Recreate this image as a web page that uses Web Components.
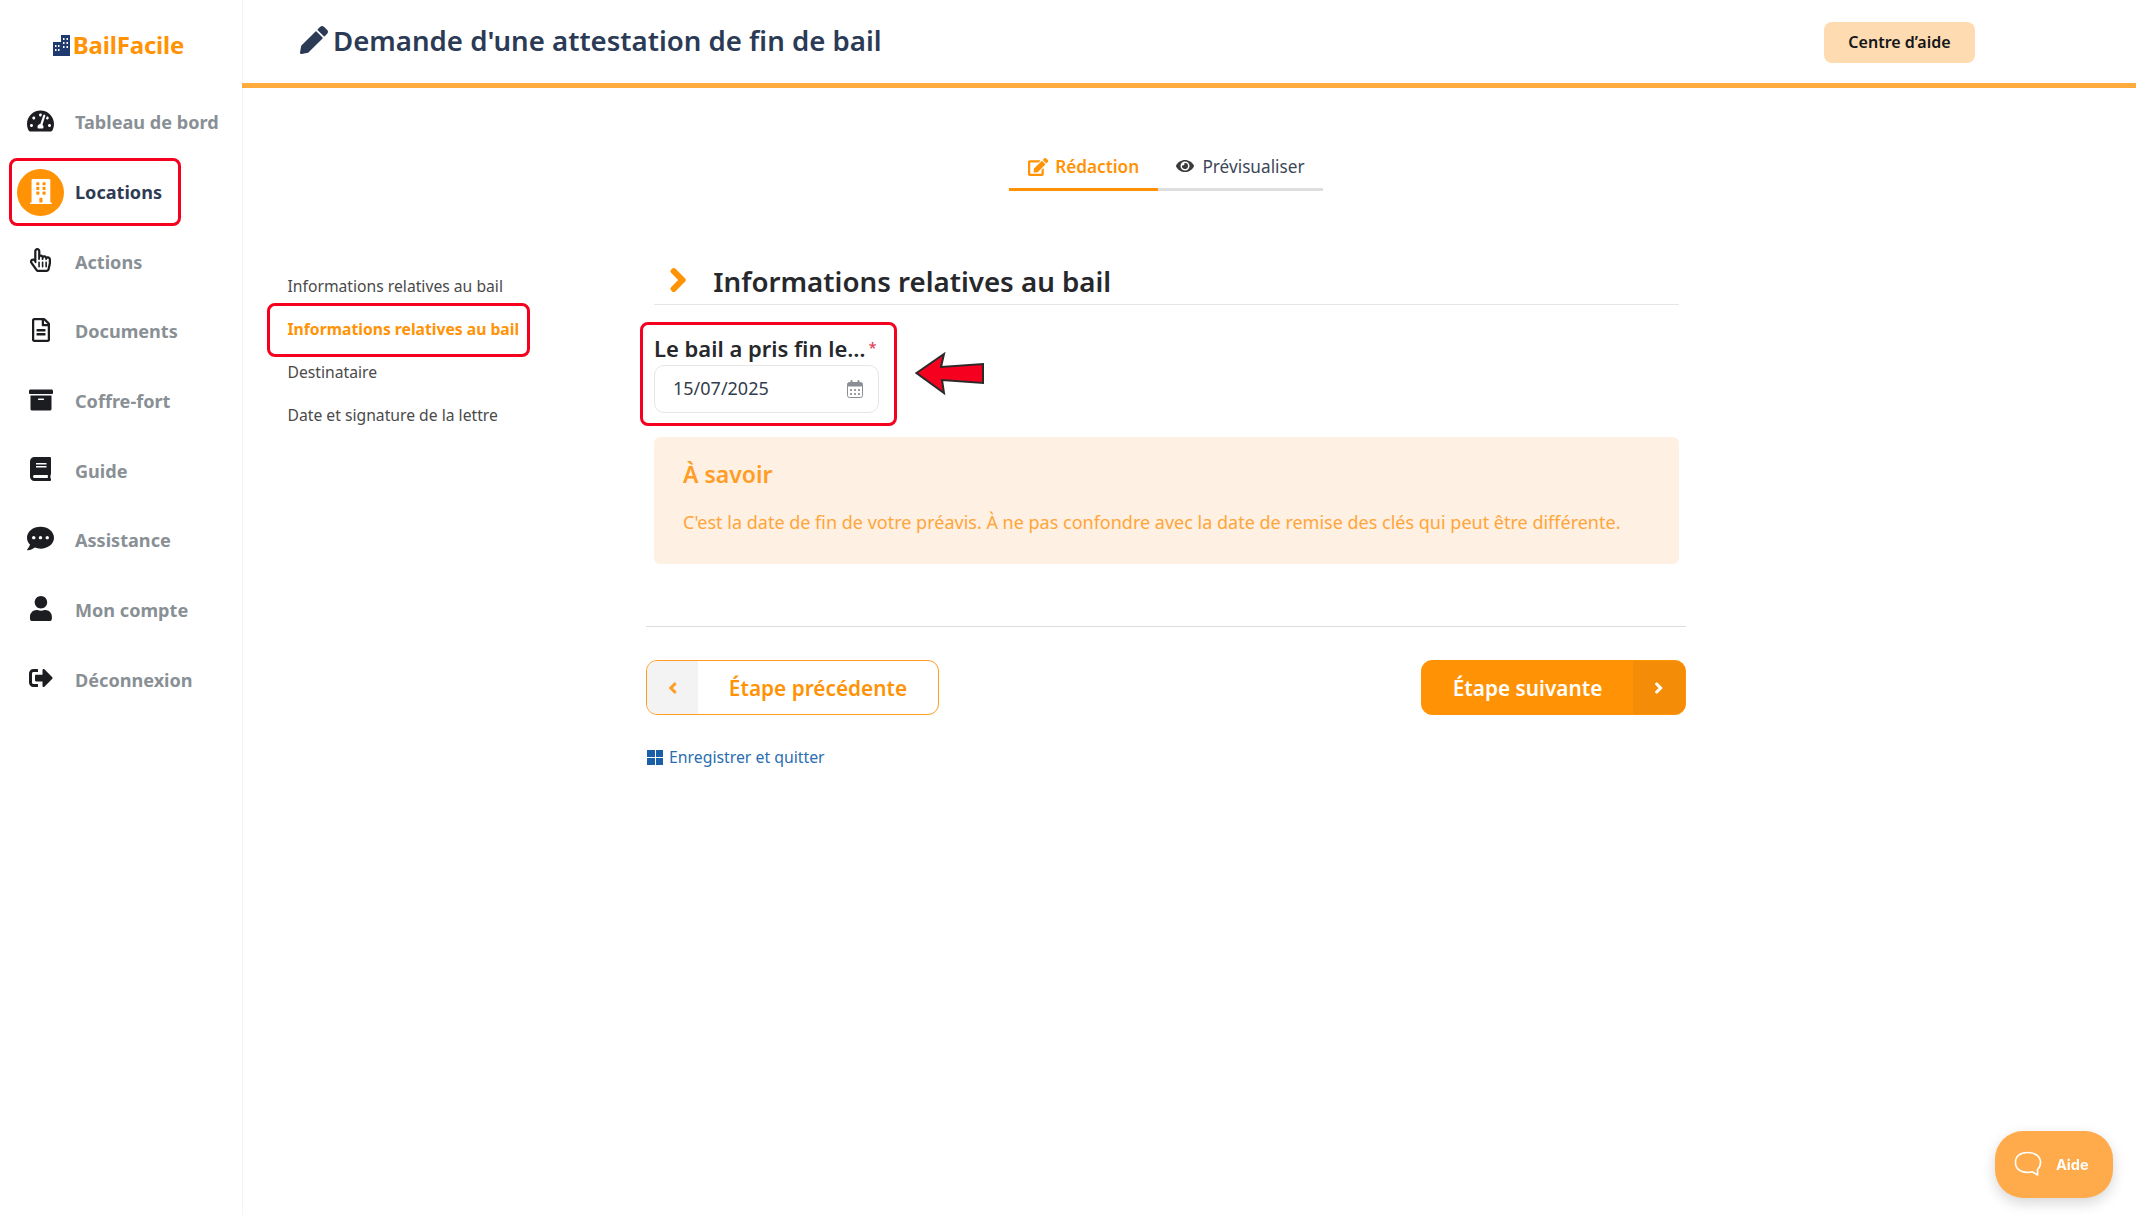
<!DOCTYPE html>
<html lang="fr">
<head>
<meta charset="utf-8">
<title>BailFacile</title>
<style>
  html, body { margin: 0; height: 100%; background: #fff; }
  body { font-family: "Noto Sans", "Open Sans", sans-serif; overflow: hidden; }
</style>
</head>
<body>
<bf-app>
  <bf-sidebar slot="side">
    <bf-nav icon="gauge">Tableau de bord</bf-nav>
    <bf-nav icon="building" active framed>Locations</bf-nav>
    <bf-nav icon="hand">Actions</bf-nav>
    <bf-nav icon="file">Documents</bf-nav>
    <bf-nav icon="archive">Coffre-fort</bf-nav>
    <bf-nav icon="book">Guide</bf-nav>
    <bf-nav icon="dots">Assistance</bf-nav>
    <bf-nav icon="user">Mon compte</bf-nav>
    <bf-nav icon="logout">Déconnexion</bf-nav>
  </bf-sidebar>
  <bf-header slot="head">Demande d'une attestation de fin de bail</bf-header>
  <bf-tabs slot="tabs"></bf-tabs>
  <bf-steps slot="steps"></bf-steps>
  <bf-form slot="form"></bf-form>
</bf-app>
<bf-help></bf-help>

<script>
const ICONS = {
  pencil: ['0 0 512 512', 'M497.9 142.1l-46.1 46.1c-4.7 4.7-12.3 4.7-17 0l-111-111c-4.7-4.7-4.7-12.3 0-17l46.1-46.1c18.7-18.7 49.1-18.7 67.9 0l60.1 60.1c18.8 18.7 18.8 49.1 0 67.9zM284.2 99.8L21.6 362.4.4 483.9c-2.9 16.4 11.4 30.6 27.8 27.8l121.5-21.3 262.6-262.6c4.7-4.7 4.7-12.3 0-17l-111-111c-4.8-4.7-12.4-4.7-17.1 0z'],
  edit: ['0 0 576 512', 'M402.6 83.2l90.2 90.2c3.8 3.8 3.8 10 0 13.8L274.4 405.6l-92.8 10.3c-12.4 1.4-22.9-9.1-21.5-21.5l10.3-92.8L388.8 83.2c3.8-3.8 10-3.8 13.8 0zm162-22.9l-48.8-48.8c-15.2-15.2-39.9-15.2-55.2 0l-35.4 35.4c-3.8 3.8-3.8 10 0 13.8l90.2 90.2c3.8 3.8 10 3.8 13.8 0l35.4-35.4c15.2-15.3 15.2-40 0-55.2zM384 346.2V448H64V128h229.8c3.2 0 6.2-1.3 8.5-3.5l40-40c7.6-7.6 2.2-20.5-8.5-20.5H48C21.5 64 0 85.5 0 112v352c0 26.5 21.5 48 48 48h352c26.5 0 48-21.5 48-48V306.2c0-10.7-12.9-16-20.5-8.5l-40 40c-2.2 2.3-3.5 5.3-3.5 8.5z'],
  eye: ['0 0 576 512', 'M572.52 241.4C518.29 135.59 410.93 64 288 64S57.68 135.64 3.48 241.41a32.35 32.35 0 0 0 0 29.19C57.71 376.41 165.07 448 288 448s230.32-71.64 284.52-177.41a32.35 32.35 0 0 0 0-29.19zM288 400a144 144 0 1 1 144-144 143.93 143.93 0 0 1-144 144zm0-240a95.31 95.31 0 0 0-25.31 3.79 47.85 47.85 0 0 1-66.9 66.9A95.78 95.78 0 1 0 288 160z'],
  chevron: ['0 0 320 512', 'M285.476 272.971L91.132 467.314c-9.373 9.373-24.569 9.373-33.941 0l-22.667-22.667c-9.357-9.357-9.375-24.522-.04-33.901L188.505 256 34.484 101.255c-9.335-9.379-9.317-24.544.04-33.901l22.667-22.667c9.373-9.373 24.569-9.373 33.941 0L285.475 239.03c9.373 9.372 9.373 24.568.001 33.941z'],
  chevronleft: ['0 0 320 512', 'M34.52 239.03L228.87 44.69c9.37-9.37 24.57-9.37 33.94 0l22.67 22.67c9.36 9.36 9.37 24.52.04 33.9L131.49 256l154.02 154.75c9.34 9.38 9.32 24.54-.04 33.9l-22.67 22.67c-9.37 9.37-24.57 9.37-33.94 0L34.52 272.97c-9.37-9.37-9.37-24.57 0-33.94z'],
  user: ['0 0 448 512', 'M224 256c70.7 0 128-57.3 128-128S294.7 0 224 0 96 57.3 96 128s57.3 128 128 128zm89.6 32h-16.7c-22.2 10.2-46.9 16-72.9 16s-50.6-5.8-72.9-16h-16.7C60.2 288 0 348.2 0 422.4V464c0 26.5 21.5 48 48 48h352c26.5 0 48-21.5 48-48v-41.6c0-74.2-60.2-134.4-134.4-134.4z'],
  archive: ['0 0 512 512', 'M32 448c0 17.7 14.3 32 32 32h384c17.7 0 32-14.3 32-32V160H32v288zm160-212c0-6.6 5.4-12 12-12h104c6.6 0 12 5.4 12 12v8c0 6.6-5.4 12-12 12H204c-6.6 0-12-5.4-12-12v-8zM480 32H32C14.3 32 0 46.3 0 64v48c0 8.8 7.2 16 16 16h480c8.8 0 16-7.2 16-16V64c0-17.7-14.3-32-32-32z'],
  book: ['0 0 448 512', 'M448 360V24c0-13.3-10.7-24-24-24H96C43 0 0 43 0 96v320c0 53 43 96 96 96h328c13.3 0 24-10.7 24-24v-16c0-7.5-3.5-14.3-8.9-18.7-4.2-15.4-4.2-59.3 0-74.7 5.4-4.3 8.9-11.1 8.9-18.6zM128 134c0-3.3 2.7-6 6-6h212c3.3 0 6 2.7 6 6v20c0 3.3-2.7 6-6 6H134c-3.3 0-6-2.7-6-6v-20zm0 64c0-3.3 2.7-6 6-6h212c3.3 0 6 2.7 6 6v20c0 3.3-2.7 6-6 6H134c-3.3 0-6-2.7-6-6v-20zm253.4 250H96c-17.7 0-32-14.3-32-32 0-17.6 14.4-32 32-32h285.4c-1.9 17.1-1.9 46.9 0 64z'],
  dots: ['0 0 512 512', 'M256 32C114.6 32 0 125.1 0 240c0 49.6 21.4 95 57 130.7C44.5 421.1 2.7 466 2.2 466.5c-2.2 2.3-2.8 5.7-1.5 8.7S4.8 480 8 480c66.3 0 116-31.8 140.6-51.4 32.7 12.3 69 19.4 107.4 19.4 141.4 0 256-93.1 256-208S397.4 32 256 32zM128 272c-17.7 0-32-14.3-32-32s14.3-32 32-32 32 14.3 32 32-14.3 32-32 32zm128 0c-17.7 0-32-14.3-32-32s14.3-32 32-32 32 14.3 32 32-14.3 32-32 32zm128 0c-17.7 0-32-14.3-32-32s14.3-32 32-32 32 14.3 32 32-14.3 32-32 32z'],
  logout: ['0 0 512 512', 'M497 273L329 441c-15 15-41 4.5-41-17v-96H152c-13.3 0-24-10.7-24-24v-96c0-13.3 10.7-24 24-24h136V88c0-21.4 25.9-32 41-17l168 168c9.3 9.4 9.3 24.6 0 34zM192 436v-40c0-6.6-5.4-12-12-12H96c-17.7 0-32-14.3-32-32V160c0-17.7 14.3-32 32-32h84c6.6 0 12-5.4 12-12V76c0-6.6-5.4-12-12-12H96c-53 0-96 43-96 96v192c0 53 43 96 96 96h84c6.6 0 12-5.4 12-12z'],
  gauge: ['0 0 576 512', 'M288 32C128.94 32 0 160.94 0 320c0 52.8 14.25 102.26 39.06 144.8 5.61 9.62 16.3 15.2 27.44 15.2h443c11.14 0 21.83-5.58 27.44-15.2C561.75 422.26 576 372.8 576 320c0-159.06-128.94-288-288-288zm0 64c14.71 0 26.58 10.13 30.32 23.65-1.11 2.26-2.64 4.23-3.45 6.67l-9.22 27.67c-5.13 3.49-10.97 6.01-17.64 6.01-17.67 0-32-14.33-32-32S270.33 96 288 96zM96 384c-17.67 0-32-14.33-32-32s14.33-32 32-32 32 14.33 32 32-14.33 32-32 32zm48-160c-17.67 0-32-14.33-32-32s14.33-32 32-32 32 14.33 32 32-14.33 32-32 32zm246.77-72.41l-61.33 184C343.13 347.33 352 364.54 352 384c0 11.72-3.38 22.55-8.88 32H232.88c-5.5-9.45-8.88-20.28-8.88-32 0-33.94 26.5-61.43 59.9-63.59l61.34-184.01c4.17-12.56 17.73-19.45 30.36-15.17 12.57 4.19 19.35 17.79 15.17 30.36zm14.66 57.2l15.52-46.55c3.47-1.29 7.13-2.23 11.05-2.23 17.67 0 32 14.33 32 32s-14.33 32-32 32c-11.38-.01-20.89-6.28-26.57-15.22zM480 384c-17.67 0-32-14.33-32-32s14.33-32 32-32 32 14.33 32 32-14.33 32-32 32z'],
  hand: ['0 0 448 512', 'M358.182 179.361c-19.493-24.768-52.679-31.945-79.872-19.098-15.127-15.687-36.182-22.487-56.595-19.629V67c0-36.944-29.736-67-66.286-67S89.143 30.056 89.143 67v161.129c-19.909-7.41-43.272-5.094-62.083 8.872-29.355 21.795-35.793 63.333-14.55 93.152l109.699 154.001C134.632 501.59 154.741 512 176 512h178.286c30.802 0 57.574-21.5 64.557-51.797l27.429-118.999A67.873 67.873 0 0 0 448 326v-84c0-46.844-46.625-79.273-89.818-62.639zM80.985 279.697l27.126 38.079c8.995 12.626 29.031 6.287 29.031-9.283V67c0-25.12 36.571-25.16 36.571 0v175c0 8.836 7.163 16 16 16h6.857c8.837 0 16-7.164 16-16v-35c0-25.12 36.571-25.16 36.571 0v35c0 8.836 7.163 16 16 16H272c8.837 0 16-7.164 16-16v-21c0-25.12 36.571-25.16 36.571 0v21c0 8.836 7.163 16 16 16h6.857c8.837 0 16-7.164 16-16 0-25.121 36.571-25.16 36.571 0v84c0 1.488-.169 2.977-.502 4.423l-27.43 119.001c-1.978 8.582-9.29 14.576-17.782 14.576H176c-5.769 0-11.263-2.878-14.697-7.697l-109.712-154c-14.406-20.223 14.994-42.818 29.394-22.606zM176.143 400v-96c0-8.837 6.268-16 14-16h6c7.732 0 14 7.163 14 16v96c0 8.837-6.268 16-14 16h-6c-7.732 0-14-7.163-14-16zm75.428 0v-96c0-8.837 6.268-16 14-16h6c7.732 0 14 7.163 14 16v96c0 8.837-6.268 16-14 16h-6c-7.732 0-14-7.163-14-16zM327 400v-96c0-8.837 6.268-16 14-16h6c7.732 0 14 7.163 14 16v96c0 8.837-6.268 16-14 16h-6c-7.732 0-14-7.163-14-16z'],
  file: ['0 0 384 512', 'M288 248v28c0 6.6-5.4 12-12 12H108c-6.6 0-12-5.4-12-12v-28c0-6.6 5.4-12 12-12h168c6.6 0 12 5.4 12 12zm-12 72H108c-6.6 0-12 5.4-12 12v28c0 6.6 5.4 12 12 12h168c6.6 0 12-5.4 12-12v-28c0-6.6-5.4-12-12-12zm108-188.1V464c0 26.5-21.5 48-48 48H48c-26.5 0-48-21.5-48-48V48C0 21.5 21.5 0 48 0h204.1C264.8 0 277 5.1 286 14.1L369.9 98c9 8.9 14.1 21.2 14.1 33.9zm-128-80V128h76.1L256 51.9zM336 464V176H232c-13.3 0-24-10.7-24-24V48H48v416h288z'],
  building: ['0 0 448 512', 'M436 480h-20V24c0-13.255-10.745-24-24-24H56C42.745 0 32 10.745 32 24v456H12c-6.627 0-12 5.373-12 12v20h448v-20c0-6.627-5.373-12-12-12zM128 76c0-6.627 5.373-12 12-12h40c6.627 0 12 5.373 12 12v40c0 6.627-5.373 12-12 12h-40c-6.627 0-12-5.373-12-12V76zm0 96c0-6.627 5.373-12 12-12h40c6.627 0 12 5.373 12 12v40c0 6.627-5.373 12-12 12h-40c-6.627 0-12-5.373-12-12v-40zm52 148h-40c-6.627 0-12-5.373-12-12v-40c0-6.627 5.373-12 12-12h40c6.627 0 12 5.373 12 12v40c0 6.627-5.373 12-12 12zm76 160h-64v-84c0-6.627 5.373-12 12-12h40c6.627 0 12 5.373 12 12v84zm64-172c0 6.627-5.373 12-12 12h-40c-6.627 0-12-5.373-12-12v-40c0-6.627 5.373-12 12-12h40c6.627 0 12 5.373 12 12v40zm0-96c0 6.627-5.373 12-12 12h-40c-6.627 0-12-5.373-12-12v-40c0-6.627 5.373-12 12-12h40c6.627 0 12 5.373 12 12v40zm0-96c0 6.627-5.373 12-12 12h-40c-6.627 0-12-5.373-12-12V76c0-6.627 5.373-12 12-12h40c6.627 0 12 5.373 12 12v40z']
};

// thick adds a stroke of the same colour, for the chunkier chevrons
function icon(name, size, color, thick) {
  const [box, d] = ICONS[name];
  const extra = thick ? ` stroke="${color}" stroke-width="${thick}" stroke-linejoin="round"` : '';
  return `<svg viewBox="${box}" height="${size}" style="display:block;overflow:visible" fill="${color}"><path d="${d}"${extra}/></svg>`;
}

class BfApp extends HTMLElement {
  constructor() {
    super();
    this.attachShadow({ mode: 'open' }).innerHTML = `
      <style>
        :host { display: grid; grid-template-columns: 242px 1fr; height: 1215px; }
        .main { min-width: 0; display: flex; flex-direction: column; }
        .body { display: grid; grid-template-columns: 404px 1040px; grid-template-rows: auto 1fr; }
        .tabs { grid-column: 2; justify-self: center; margin-top: 42px; }
        .steps { margin-top: 74px; }
        .form { margin-top: 65px; }
      </style>
      <slot name="side"></slot>
      <div class="main">
        <slot name="head"></slot>
        <div class="body">
          <div class="tabs"><slot name="tabs"></slot></div>
          <div class="steps"><slot name="steps"></slot></div>
          <div class="form"><slot name="form"></slot></div>
        </div>
      </div>`;
  }
}

class BfSidebar extends HTMLElement {
  constructor() {
    super();
    this.attachShadow({ mode: 'open' }).innerHTML = `
      <style>
        :host { display: block; border-right: 1px solid #f4f4f4; box-sizing: border-box; width: 243px; }
        .logo { height: 87.5px; display: flex; align-items: center; justify-content: center; gap: 3px; padding-top: 4px; padding-bottom: 2px; box-sizing: border-box;
                color: #ff9305; font-size: 24px; font-weight: 700; letter-spacing: -.2px; margin-right: 5px; }
        .logo svg { display: block; margin-top: 2px; }
      </style>
      <div class="logo">
        <svg width="17" height="21" viewBox="0 0 17 21" fill="#1f3a6e">
          <rect x="8" y="0" width="9" height="21"/>
          <rect x="0" y="7" width="8" height="14"/>
          <g fill="#fff">
            <rect x="10" y="3" width="1.5" height="2"/><rect x="13.5" y="3" width="1.5" height="2"/>
            <rect x="10" y="7" width="1.5" height="2"/><rect x="13.5" y="7" width="1.5" height="2"/>
            <rect x="10" y="11" width="1.5" height="2"/><rect x="13.5" y="11" width="1.5" height="2"/>
            <rect x="2" y="10" width="1.5" height="2"/><rect x="5" y="10" width="1.5" height="2"/>
            <rect x="2" y="14" width="1.5" height="2"/><rect x="5" y="14" width="1.5" height="2"/>
          </g>
        </svg>
        <span>BailFacile</span>
      </div>
      <slot></slot>`;
  }
}

class BfNav extends HTMLElement {
  connectedCallback() {
    if (this.shadowRoot) return;
    const active = this.hasAttribute('active');
    const name = this.getAttribute('icon');
    const sizes = { gauge: 24, hand: 24, file: 24, archive: 24, book: 24, dots: 27, user: 25, logout: 24, building: 25 };
    this.attachShadow({ mode: 'open' }).innerHTML = `
      <style>
        :host { display: flex; align-items: center; height: 69.7px; position: relative;
                font-size: 18.1px; font-weight: 700; color: ${active ? '#2f3b55' : '#899095'}; }
        .ic { width: 47px; height: 47px; margin-left: 17px; margin-right: 11px; display: flex; align-items: center; justify-content: center; flex: none;
              border-radius: 50%; background: ${active ? '#ff9305' : 'transparent'}; }
        .ic svg { margin-top: ${active ? -1 : -3}px; }
        .frame { position: absolute; left: 9px; top: 1px; width: 172px; height: 68px; box-sizing: border-box;
                 border: 3px solid #f5001e; border-radius: 8px; }
      </style>
      <span class="ic">${icon(name, sizes[name], active ? '#fff' : '#1c1d20')}</span>
      <slot></slot>
      ${this.hasAttribute('framed') ? '<span class="frame"></span>' : ''}`;
  }
}

class BfHeader extends HTMLElement {
  constructor() {
    super();
    this.attachShadow({ mode: 'open' }).innerHTML = `
      <style>
        :host { display: flex; align-items: center; height: 88px; box-sizing: border-box; border-bottom: 5px solid #ffab3d; padding-left: 58px; }
        .t { display: flex; align-items: center; gap: 5px; font-size: 27.6px; font-weight: 600; color: #2b3a55; margin-top: -3px; }
        button { margin-left: auto; margin-right: 161px; width: 151px; height: 41px; border: 0; border-radius: 8px; background: #fedbb0;
                 font: 600 16px "Noto Sans", sans-serif; color: #14161a; margin-top: 1px; }
      </style>
      <div class="t">${icon('pencil', 28, '#2b3a55')}<slot></slot></div>
      <button>Centre d’aide</button>`;
  }
}

class BfTabs extends HTMLElement {
  constructor() {
    super();
    this.attachShadow({ mode: 'open' }).innerHTML = `
      <style>
        :host { display: flex; font-size: 17.2px; }
        .tab { display: flex; justify-content: center; align-items: flex-start; gap: 8px; height: 30px; padding: 25px 0 3px; border-bottom: 3px solid #dedede; }
        .on { width: 149px; color: #ff9305; font-weight: 600; border-color: #ff9305; gap: 7px; }
        .off { width: 165px; color: #3d4757; }
        svg { margin-top: 3px; }
      </style>
      <div class="tab on">${icon('edit', 18, '#ff9305')}Rédaction</div>
      <div class="tab off">${icon('eye', 16, '#3a3a3a')}Prévisualiser</div>`;
  }
}

class BfSteps extends HTMLElement {
  constructor() {
    super();
    this.attachShadow({ mode: 'open' }).innerHTML = `
      <style>
        :host { display: block; padding-left: 45.5px; font-size: 15.7px; color: #4a4a4a; position: relative; }
        div { height: 43px; line-height: 43px; white-space: nowrap; }
        .on { color: #ff9305; font-weight: 700; position: relative; }
        .frame { position: absolute; left: -20.5px; top: 0; width: 263px; height: 54px; margin-top: -5px; box-sizing: border-box;
                 border: 3px solid #f5001e; border-radius: 8px; }
      </style>
      <div>Informations relatives au bail</div>
      <div class="on">Informations relatives au bail<span class="frame"></span></div>
      <div>Destinataire</div>
      <div>Date et signature de la lettre</div>`;
  }
}

class BfField extends HTMLElement {
  constructor() {
    super();
    this.attachShadow({ mode: 'open' }).innerHTML = `
      <style>
        :host { display: block; width: 225px; position: relative; }
        label { display: block; font-size: 22px; font-weight: 600; color: #26282c; line-height: 30px; white-space: nowrap; }
        sup { color: #e0455a; font-size: 14px; font-weight: 600; line-height: 0; margin-left: 3px; vertical-align: 4px; }
        .input { margin-top: 2px; height: 48px; box-sizing: border-box; border: 1px solid #e6e6e6; border-radius: 10px; display: flex; align-items: center; justify-content: space-between;
                 padding: 0 15px 2px 18px; font-size: 18px; color: #333c4d; }
        .frame { position: absolute; left: -14px; top: -11px; right: -18px; bottom: -13px; border: 3px solid #f5001e; border-radius: 8px; }
        .arrow { position: absolute; left: 261px; top: 19px; }
      </style>
      <label>Le bail a pris fin le…<sup>*</sup></label>
      <div class="input">
        <span>15/07/2025</span>
        <svg width="16" height="18" viewBox="0 0 16 18" style="margin-top:2px">
          <rect x=".5" y="2.5" width="15" height="15" rx="2" fill="#fff" stroke="#8a8f96"/>
          <rect x=".5" y="2.5" width="15" height="4" rx="1.5" fill="#8a8f96"/>
          <rect x="3.5" y="0" width="2" height="4" rx="1" fill="#8a8f96"/><rect x="10.5" y="0" width="2" height="4" rx="1" fill="#8a8f96"/>
          <g fill="#9a9fa5"><rect x="3" y="9" width="2" height="2"/><rect x="7" y="9" width="2" height="2"/><rect x="11" y="9" width="2" height="2"/>
          <rect x="3" y="13" width="2" height="2"/><rect x="7" y="13" width="2" height="2"/><rect x="11" y="13" width="2" height="2"/></g>
        </svg>
      </div>
      <span class="frame"></span>
      <svg class="arrow" width="72" height="44" viewBox="0 0 72 44">
        <path d="M1.500 21 L29 2 L26 15 L68 12 L68 31 L27 28 L29 41 Z" fill="#f5001e" stroke="#2a2a2a" stroke-width="2" stroke-linejoin="miter"/>
      </svg>`;
  }
}

class BfCallout extends HTMLElement {
  constructor() {
    super();
    this.attachShadow({ mode: 'open' }).innerHTML = `
      <style>
        :host { display: block; background: #fef0e2; border-radius: 6px; height: 127px; box-sizing: border-box; padding: 20px 29px; color: #ffa53a; }
        h3 { margin: 0; font-size: 23px; font-weight: 600; line-height: 35px; color: #ff9d26; }
        p { margin: 17px 0 0; font-size: 18px; line-height: 27px; white-space: nowrap; }
      </style>
      <h3><slot name="title"></slot></h3>
      <p><slot></slot></p>`;
  }
}

class BfButton extends HTMLElement {
  connectedCallback() {
    if (this.shadowRoot) return;
    const next = this.hasAttribute('next');
    this.attachShadow({ mode: 'open' }).innerHTML = `
      <style>
        :host { display: flex; flex-direction: ${next ? 'row-reverse' : 'row'}; height: 55px; box-sizing: border-box; width: ${next ? 265 : 293}px; border-radius: 11px; overflow: hidden;
                border: 1.5px solid #ff9c20; background: ${next ? '#ff9305' : '#fff'}; color: ${next ? '#fff' : '#ff9305'};
                font-size: 20.8px; font-weight: 600; }
        :host([next]) { border-color: #ff9305; }
        .cap { width: ${next ? 52 : 51}px; background: ${next ? '#f58c08' : '#f3f3f3'}; display: flex; align-items: center; justify-content: center; flex: none; }
        .label { flex: 1; display: flex; align-items: center; justify-content: center; }
      </style>
      <span class="cap">${icon(next ? 'chevron' : 'chevronleft', 12, next ? '#fff' : '#ff9d26', 50)}</span>
      <span class="label"><slot></slot></span>`;
  }
}

class BfForm extends HTMLElement {
  constructor() {
    super();
    this.attachShadow({ mode: 'open' }).innerHTML = `
      <style>
        :host { display: block; }
        .inner { padding: 0 7px 0 8px; }
        .head { display: flex; align-items: center; gap: 27px; height: 49px; padding-left: 16px; border-bottom: 1px solid #e5e5e5; box-sizing: border-box;
                font-size: 27.7px; font-weight: 600; color: #26282c; }
        .head span { margin-top: 1px; }
        bf-field { margin-top: 28px; }
        bf-callout { margin-top: 24px; }
        .rule { height: 1px; background: #dcdcdc; margin-top: 62px; }
        .btns { display: flex; justify-content: space-between; margin-top: 33px; }
        a { display: flex; align-items: center; gap: 6px; margin-top: 31px; font-size: 15.8px; line-height: 22px; color: #2a6db0; text-decoration: none; padding-left: 1px; }
        .grid { display: grid; grid-template-columns: 7.5px 7.5px; grid-auto-rows: 7px; gap: 1px; }
        .grid i { background: #1a5fa8; }
      </style>
      <div class="inner">
        <div class="head">${icon('chevron', 26, '#ff9305', 40)}<span>Informations relatives au bail</span></div>
        <bf-field></bf-field>
        <bf-callout>
          <span slot="title">À savoir</span>
          C'est la date de fin de votre préavis. À ne pas confondre avec la date de remise des clés qui peut être différente.
        </bf-callout>
      </div>
      <div class="rule"></div>
      <div class="btns">
        <bf-button>Étape précédente</bf-button>
        <bf-button next>Étape suivante</bf-button>
      </div>
      <a href="#"><span class="grid"><i></i><i></i><i></i><i></i></span>Enregistrer et quitter</a>`;
  }
}

class BfHelp extends HTMLElement {
  constructor() {
    super();
    this.attachShadow({ mode: 'open' }).innerHTML = `
      <style>
        :host { position: fixed; left: 1995px; top: 1131px; width: 118px; height: 67px; border-radius: 28px; background: #ffab4c;
                box-shadow: 0 5px 14px rgba(0,0,0,.16); display: flex; align-items: center; gap: 13px; padding-left: 19px; box-sizing: border-box;
                color: #fff; font: 700 14.5px Inter, "Noto Sans", sans-serif; }
      </style>
      <svg width="29" height="29" viewBox="0 0 29 29" fill="none" stroke="#fff" stroke-width="1.6" stroke-linejoin="round">
        <path d="M13.5 2.500c7.500 0 13 3.500 13 10 0 3-1.200 5.400-3 7l.2 5.500-5.500-3.200c-1.500.4-3 .6-4.700.6-7.500 0-12-4-12-10s4.500-9.900 12-9.900z"/>
      </svg>
      <span>Aide</span>`;
  }
}

customElements.define('bf-app', BfApp);
customElements.define('bf-sidebar', BfSidebar);
customElements.define('bf-nav', BfNav);
customElements.define('bf-header', BfHeader);
customElements.define('bf-tabs', BfTabs);
customElements.define('bf-steps', BfSteps);
customElements.define('bf-field', BfField);
customElements.define('bf-callout', BfCallout);
customElements.define('bf-button', BfButton);
customElements.define('bf-form', BfForm);
customElements.define('bf-help', BfHelp);
</script>
</body>
</html>
